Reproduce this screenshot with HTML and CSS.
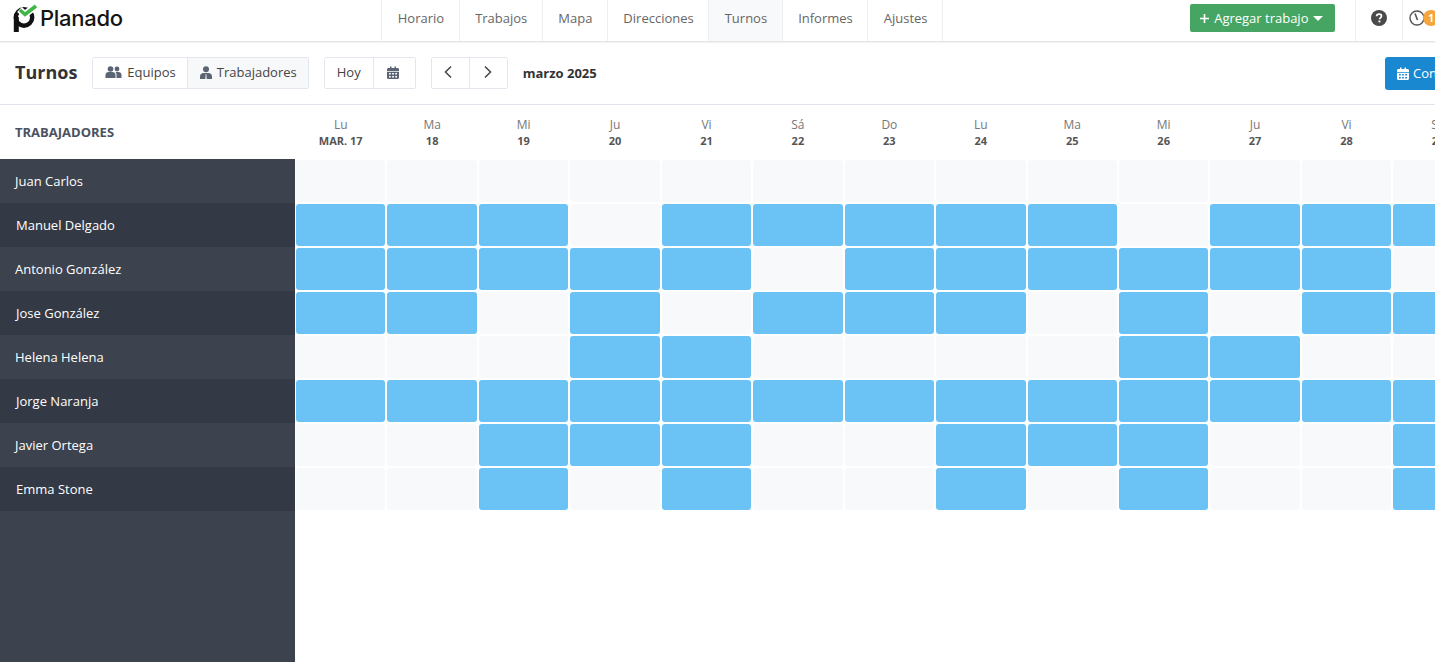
FILE: index.html
```html
<!DOCTYPE html>
<html lang="es">
<head>
    <meta charset="UTF-8">
    <meta name="viewport" content="width=device-width, initial-scale=1.0">
    <title>Turnos - Planado</title>
    <link rel="stylesheet" href="styles.css">
</head>
<body>
    <div class="page">
        <header class="topbar">
            <a class="logo" href="#">
                <svg class="logo-mark" width="26" height="29" viewBox="0 0 26 29">
                    <circle cx="11" cy="13.500" r="8.200" fill="none" stroke="#111" stroke-width="4.400"/>
                    <path d="M3.300 13v15" stroke="#111" stroke-width="5"/>
                    <path d="M6.500 5.500l5.500 5L23 1.500" fill="none" stroke="#fff" stroke-width="7"/>
                    <path d="M7 6l5 4.500L23 2" fill="none" stroke="#3fb54a" stroke-width="3.600"/>
                </svg>
                <span class="logo-text">Planado</span>
            </a>
            <nav class="main-nav">
                <a href="#">Horario</a>
                <a href="#">Trabajos</a>
                <a href="#">Mapa</a>
                <a href="#">Direcciones</a>
                <a href="#" class="active">Turnos</a>
                <a href="#">Informes</a>
                <a href="#">Ajustes</a>
            </nav>
            <button class="add-job">
                <svg width="11" height="11" viewBox="0 0 11 11"><path d="M5.500 1v9M1 5.500h9" stroke="#fff" stroke-width="1.600"/></svg>
                Agregar trabajo
                <svg class="caret" width="10" height="5" viewBox="0 0 10 5"><path d="M0 0h10L5 5z" fill="#fff"/></svg>
            </button>
            <div class="top-icon help">
                <svg width="16" height="16" viewBox="0 0 16 16">
                    <circle cx="8" cy="8" r="8" fill="#4a4a4a"/>
                    <path d="M5.600 6.300c0-1.500 1-2.200 2.500-2.200s2.400.8 2.400 2c0 1.700-2 1.700-2 3.200" fill="none" stroke="#fff" stroke-width="1.700"/>
                    <rect x="7.500" y="10.500" width="1.900" height="1.900" fill="#fff"/>
                </svg>
            </div>
            <div class="top-icon clock">
                <svg width="16" height="16" viewBox="0 0 16 16">
                    <circle cx="8" cy="8" r="7" fill="#fff" stroke="#555" stroke-width="1.400"/>
                    <path d="M6 3.500l2.500 6.500" stroke="#555" stroke-width="1.600"/>
                </svg>
                <span class="badge">1</span>
            </div>
        </header>

        <div class="toolbar">
            <h1>Turnos</h1>
            <div class="btn-group">
                <button class="btn">
                    <svg width="17" height="12" viewBox="0 0 16 12" fill="#5a6472">
                        <circle cx="5" cy="3" r="2.800"/><circle cx="11.500" cy="3" r="2.400"/>
                        <path d="M0 12V9c0-2 1.500-3 3-3h4c1.500 0 3 1 3 3v3z"/>
                        <path d="M11 12V8.500c0-1-.4-1.800-1-2.500h3c1.600 0 3 1 3 3v3z"/>
                    </svg>
                    Equipos
                </button>
                <button class="btn selected">
                    <svg width="12" height="13" viewBox="0 0 12 13" fill="#5a6472">
                        <circle cx="6" cy="3.200" r="3"/>
                        <path d="M0 13v-2.500C0 8.500 1.500 7 3.500 7h5C10.500 7 12 8.500 12 10.500V13H6.700L6.300 8h-.6l-.4 5z"/>
                    </svg>
                    Trabajadores
                </button>
            </div>
            <div class="btn-group today">
                <button class="btn">Hoy</button>
                <button class="btn icon-btn">
                    <svg width="12" height="13" viewBox="0 0 12 13" fill="#5a6472">
                        <path d="M0 3.500C0 2.600.6 2 1.500 2H3V.5h1.500V2h3V.5H9V2h1.500c.9 0 1.500.6 1.500 1.500V5H0z"/>
                        <path d="M0 5.800h12v5.700c0 .9-.6 1.500-1.500 1.500h-9C.6 13 0 12.400 0 11.500zm2 1.200v1.500h1.800V7zm3.100 0v1.500h1.800V7zm3.100 0v1.500H10V7zm-6.200 3v1.500h1.800V10zm3.100 0v1.500h1.800V10zm3.100 0v1.500H10V10z" fill-rule="evenodd"/>
                    </svg>
                </button>
            </div>
            <div class="btn-group arrows">
                <button class="btn arrow-btn">
                    <svg width="8" height="14" viewBox="0 0 8 14"><path d="M7 1.500L1.500 7 7 12.500" fill="none" stroke="#444" stroke-width="1.500"/></svg>
                </button>
                <button class="btn arrow-btn">
                    <svg width="8" height="14" viewBox="0 0 8 14"><path d="M1 1.500L6.500 7 1 12.500" fill="none" stroke="#444" stroke-width="1.500"/></svg>
                </button>
            </div>
            <span class="month">marzo 2025</span>
            <button class="config">
                <svg width="12" height="13" viewBox="0 0 12 13" fill="#fff">
                    <path d="M0 3.500C0 2.600.6 2 1.500 2H3V.5h1.500V2h3V.5H9V2h1.500c.9 0 1.500.6 1.500 1.500V5H0z"/>
                    <path d="M0 5.800h12v5.700c0 .9-.6 1.500-1.500 1.500h-9C.6 13 0 12.400 0 11.500zm2 1.200v1.500h1.800V7zm3.100 0v1.500h1.800V7zm3.100 0v1.500H10V7zm-6.200 3v1.500h1.800V10zm3.100 0v1.500h1.800V10zm3.100 0v1.500H10V10z" fill-rule="evenodd"/>
                </svg>
                Configurar
            </button>
        </div>

        <div class="head-row">
            <div class="head-title">TRABAJADORES</div>
            <div class="days">
                <div class="day"><span>Lu</span><b>MAR. 17</b></div>
                <div class="day"><span>Ma</span><b>18</b></div>
                <div class="day"><span>Mi</span><b>19</b></div>
                <div class="day"><span>Ju</span><b>20</b></div>
                <div class="day"><span>Vi</span><b>21</b></div>
                <div class="day"><span>Sá</span><b>22</b></div>
                <div class="day"><span>Do</span><b>23</b></div>
                <div class="day"><span>Lu</span><b>24</b></div>
                <div class="day"><span>Ma</span><b>25</b></div>
                <div class="day"><span>Mi</span><b>26</b></div>
                <div class="day"><span>Ju</span><b>27</b></div>
                <div class="day"><span>Vi</span><b>28</b></div>
                <div class="day"><span>Sá</span><b>29</b></div>
            </div>
        </div>

        <div class="schedule">
            <aside class="workers">
                <div class="worker">Juan Carlos</div>
                <div class="worker">Manuel Delgado</div>
                <div class="worker">Antonio González</div>
                <div class="worker">Jose González</div>
                <div class="worker">Helena Helena</div>
                <div class="worker">Jorge Naranja</div>
                <div class="worker">Javier Ortega</div>
                <div class="worker">Emma Stone</div>
            </aside>
            <div class="shifts">
                <!-- Juan Carlos -->
                <i></i><i></i><i></i><i></i><i></i><i></i><i></i><i></i><i></i><i></i><i></i><i></i><i></i>
                <!-- Manuel Delgado -->
                <i class="on"></i><i class="on"></i><i class="on"></i><i></i><i class="on"></i><i class="on"></i><i class="on"></i><i class="on"></i><i class="on"></i><i></i><i class="on"></i><i class="on"></i><i class="on"></i>
                <!-- Antonio González -->
                <i class="on"></i><i class="on"></i><i class="on"></i><i class="on"></i><i class="on"></i><i></i><i class="on"></i><i class="on"></i><i class="on"></i><i class="on"></i><i class="on"></i><i class="on"></i><i></i>
                <!-- Jose González -->
                <i class="on"></i><i class="on"></i><i></i><i class="on"></i><i></i><i class="on"></i><i class="on"></i><i class="on"></i><i></i><i class="on"></i><i></i><i class="on"></i><i class="on"></i>
                <!-- Helena Helena -->
                <i></i><i></i><i></i><i class="on"></i><i class="on"></i><i></i><i></i><i></i><i></i><i class="on"></i><i class="on"></i><i></i><i></i>
                <!-- Jorge Naranja -->
                <i class="on"></i><i class="on"></i><i class="on"></i><i class="on"></i><i class="on"></i><i class="on"></i><i class="on"></i><i class="on"></i><i class="on"></i><i class="on"></i><i class="on"></i><i class="on"></i><i class="on"></i>
                <!-- Javier Ortega -->
                <i></i><i></i><i class="on"></i><i class="on"></i><i class="on"></i><i></i><i></i><i class="on"></i><i class="on"></i><i class="on"></i><i></i><i></i><i class="on"></i>
                <!-- Emma Stone -->
                <i></i><i></i><i class="on"></i><i></i><i class="on"></i><i></i><i></i><i class="on"></i><i></i><i class="on"></i><i></i><i></i><i class="on"></i>
            </div>
        </div>
    </div>
</body>
</html>
```

FILE: styles.css
```css
html, body {
    margin: 0;
    height: 100%;
    overflow: hidden;
}
body {
    font-family: "Open Sans", sans-serif;
    font-size: 13px;
    color: #333;
    background-color: #fff;
}
button {
    font-family: inherit;
    cursor: pointer;
}
svg {
    flex: none;
}
.page {
    width: 1500px;
    height: 662px;
    display: flex;
    flex-direction: column;
}

/* top bar */
.topbar {
    height: 41px;
    flex: none;
    display: flex;
    align-items: stretch;
    border-bottom: 1px solid #e3e5e8;
    box-shadow: 0 1px 1px rgba(0, 0, 0, 0.05);
}
.logo {
    width: 381px;
    flex: none;
    display: flex;
    align-items: flex-start;
    padding: 4px 0 0 13px;
    box-sizing: border-box;
    gap: 1px;
    text-decoration: none;
}
.logo-text {
    font-family: Inter, sans-serif;
    font-size: 22px;
    font-weight: 500;
    line-height: 28px;
    color: #151515;
    letter-spacing: -0.3px;
}
.main-nav {
    display: flex;
    padding-left: 0.4px;
    border-left: 1px solid #eceef0;
}
.main-nav a {
    display: flex;
    align-items: center;
    padding: 0 14.6px 6px 15.4px;
    color: #666;
    font-size: 13px;
    text-decoration: none;
    border-right: 1px solid #eceef0;
}
.main-nav a.active {
    background-color: #f8f9fa;
}
.add-job {
    margin: 4px 20px 9px 247px;
    width: 145px;
    padding: 0 0 0 9px;
    border: none;
    border-radius: 2px;
    background-color: #46a562;
    color: #fff;
    font-size: 13px;
    display: flex;
    align-items: center;
    gap: 4px;
}
.caret {
    margin-left: 1px;
}
.top-icon {
    width: 46px;
    padding-bottom: 6px;
    display: flex;
    align-items: center;
    justify-content: center;
    border-left: 1px solid #eceef0;
}
.clock {
    width: 60px;
    justify-content: flex-start;
    padding-left: 6px;
}
.badge {
    width: 16px;
    height: 16px;
    margin-left: -2px;
    border-radius: 50%;
    background-color: #f4a63c;
    color: #fff;
    font-size: 10px;
    font-weight: 700;
    text-align: center;
    line-height: 16px;
}

/* toolbar */
.toolbar {
    height: 63px;
    flex: none;
    box-sizing: border-box;
    display: flex;
    align-items: center;
    padding: 0 15px;
    border-bottom: 1px solid #e0e3ec;
}
h1 {
    margin: -2px 15px 0 0;
    font-size: 18px;
    font-weight: 700;
    color: #333;
}
.btn-group {
    display: flex;
    height: 32px;
    box-sizing: border-box;
    border: 1px solid #e3e6ec;
    border-radius: 2px;
}
.btn {
    display: flex;
    align-items: center;
    gap: 5px;
    padding: 0 11px 2px 12px;
    border: none;
    background-color: #fff;
    color: #444;
    font-size: 13px;
}
.btn + .btn {
    border-left: 1px solid #e3e6ec;
}
.btn.selected {
    background-color: #f7f8fa;
}
.today {
    margin-left: 15px;
}
.today .btn:first-child {
    padding-right: 12px;
}
.arrows {
    margin-left: 15px;
}
.icon-btn {
    padding: 0 15.5px 2px 13.5px;
}
.arrow-btn {
    padding: 0 16.5px 2px 12.5px;
}
.arrow-btn + .arrow-btn {
    padding: 0 15px 2px 14px;
}
.month {
    margin-left: 15px;
    font-size: 13px;
    font-weight: 700;
    color: #333;
}
.config {
    margin-left: auto;
    height: 33px;
    width: 100px;
    padding: 0 12px;
    display: flex;
    align-items: center;
    gap: 4px;
    border: none;
    border-radius: 3px;
    background-color: #1a88d0;
    color: #fff;
    font-size: 13px;
    white-space: nowrap;
}

/* calendar */
.head-row {
    height: 54px;
    padding-top: 1px;
    box-sizing: border-box;
    flex: none;
    display: flex;
    align-items: center;
}
.head-title {
    width: 295px;
    flex: none;
    margin-top: -2px;
    padding-left: 15px;
    box-sizing: border-box;
    font-size: 13px;
    font-weight: 700;
    color: #4a5260;
}
.days {
    display: grid;
    grid-template-columns: repeat(13, 91.45px);
}
.day {
    display: flex;
    flex-direction: column;
    align-items: center;
    line-height: 16px;
}
.day span {
    font-size: 12px;
    color: #777;
}
.day b {
    font-size: 11px;
    color: #555;
}
.schedule {
    flex: 1;
    display: flex;
}
.workers {
    width: 295px;
    flex: none;
    background-color: #3c424e;
}
.worker {
    height: 44px;
    box-sizing: border-box;
    padding-left: 15px;
    display: flex;
    align-items: center;
    color: #fff;
    font-size: 13px;
}
.worker:nth-child(even) {
    padding-left: 16px;
    background-color: #343a45;
}
.shifts {
    display: grid;
    grid-template-columns: repeat(13, 91.45px);
    grid-auto-rows: 44px;
}
.shifts i {
    margin: 1px;
    border-radius: 3px;
    background-color: #f8f9fb;
}
.shifts i.on {
    background-color: #6bc2f5;
}
```
